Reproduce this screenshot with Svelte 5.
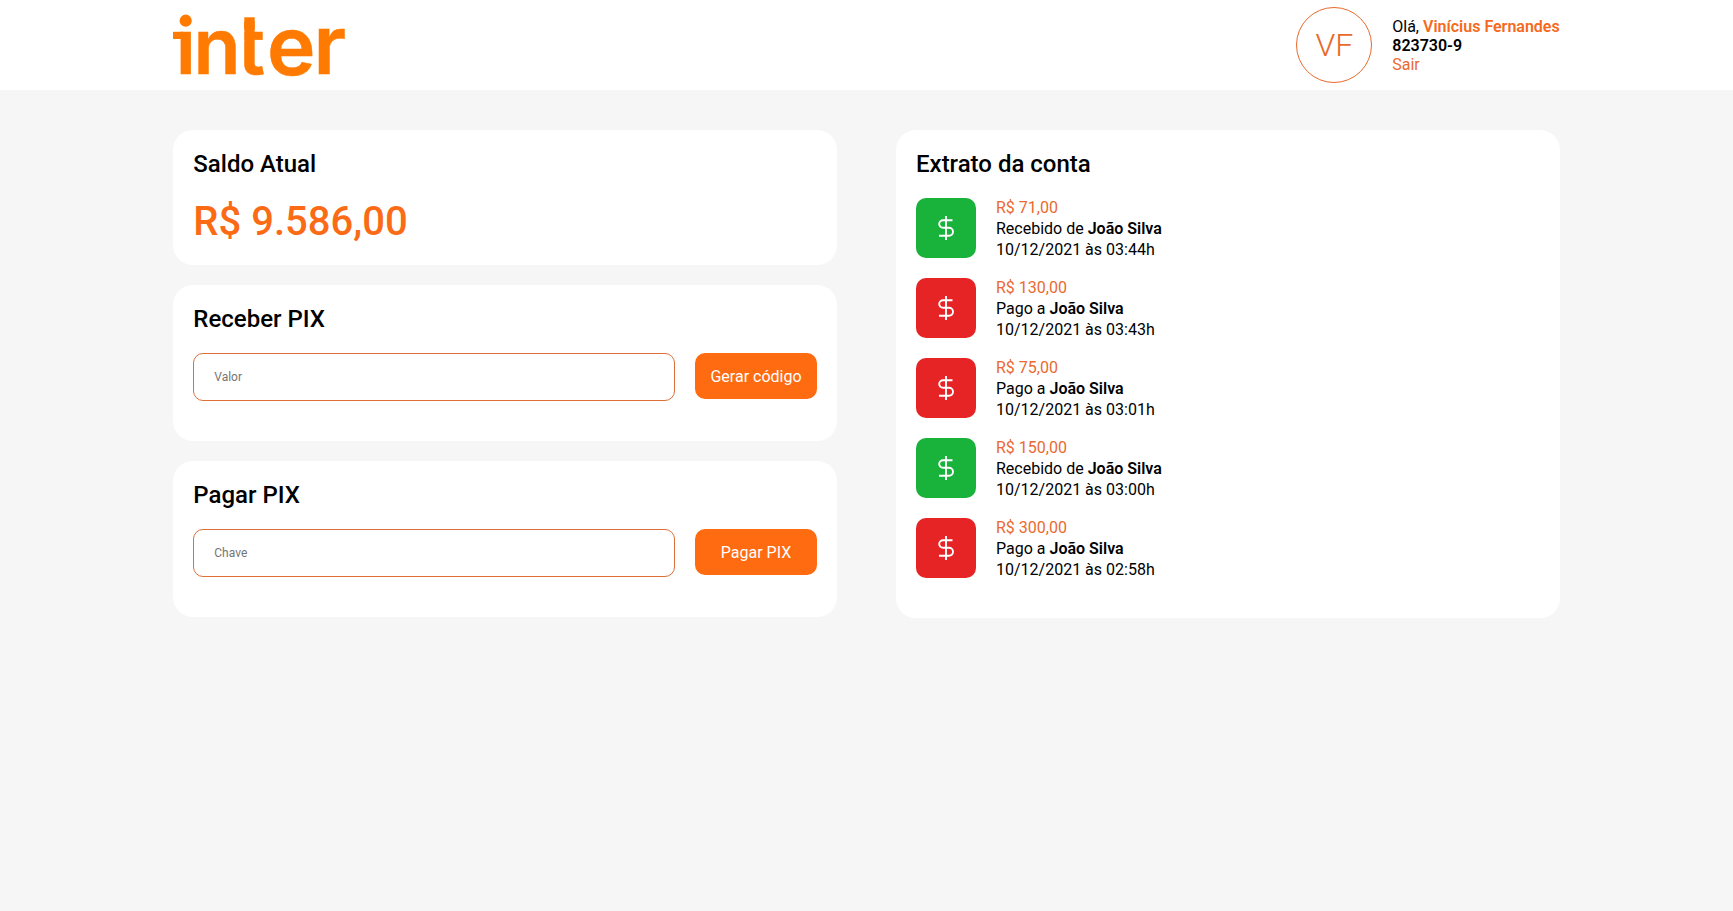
<script>
  const entries = [
    { value: 'R$ 71,00', action: 'Recebido de', name: 'João Silva', date: '10/12/2021 às 03:44h', received: true },
    { value: 'R$ 130,00', action: 'Pago a', name: 'João Silva', date: '10/12/2021 às 03:43h', received: false },
    { value: 'R$ 75,00', action: 'Pago a', name: 'João Silva', date: '10/12/2021 às 03:01h', received: false },
    { value: 'R$ 150,00', action: 'Recebido de', name: 'João Silva', date: '10/12/2021 às 03:00h', received: true },
    { value: 'R$ 300,00', action: 'Pago a', name: 'João Silva', date: '10/12/2021 às 02:58h', received: false }
  ];
</script>

<header>
  <div class="wrap bar">
    <svg class="logo" width="180" height="90" viewBox="0 -13 180 90">
      <text y="61"><tspan x="2.7 20.5 64.8">ınt</tspan><tspan x="94" y="62" font-size="82">e</tspan><tspan x="140.5" y="61" font-size="82">r</tspan></text>
      <circle cx="12.7" cy="7.7" r="6.1" />
      <rect x="0" y="18.8" width="10" height="7.2" />
      <rect x="71.3" y="4.3" width="10.4" height="12" />
      <rect class="blank" x="64.6" y="16.5" width="6.6" height="12" />
    </svg>
    <div class="user">
      <div class="avatar">VF</div>
      <div class="info">
        <p>Olá, <strong class="primary">Vinícius Fernandes</strong></p>
        <p><strong>823730-9</strong></p>
        <a href="#sair">Sair</a>
      </div>
    </div>
  </div>
</header>

<main class="wrap">
  <div class="column">
    <section class="card">
      <h2>Saldo Atual</h2>
      <p class="balance">R$ 9.586,00</p>
    </section>
    <section class="card">
      <h2>Receber PIX</h2>
      <div class="form">
        <input placeholder="Valor" />
        <button>Gerar código</button>
      </div>
    </section>
    <section class="card">
      <h2>Pagar PIX</h2>
      <div class="form">
        <input placeholder="Chave" />
        <button>Pagar PIX</button>
      </div>
    </section>
  </div>
  <div class="column">
    <section class="card">
      <h2>Extrato da conta</h2>
      {#each entries as entry}
        <div class="entry">
          <div class="icon" class:received={entry.received}>
            <svg width="26" height="26" viewBox="0 0 26 26" fill="none" stroke="currentColor" stroke-width="1.9">
              <line x1="13" y1="1" x2="13" y2="25" />
              <path d="M19.5 5.2H10a3.8 3.8 0 0 0 0 7.6h6a4 4 0 0 1 0 8H6" />
            </svg>
          </div>
          <div class="details">
            <p class="value">{entry.value}</p>
            <p>{entry.action} <strong>{entry.name}</strong></p>
            <p>{entry.date}</p>
          </div>
        </div>
      {/each}
    </section>
  </div>
</main>

<style>
  :global(body) { margin: 0; background: #f6f6f6; }
  * { box-sizing: border-box; }
  header, main, input, button { font-family: Roboto, sans-serif; font-size: 16px; }
  header, main { color: #000; font-weight: 400; }
  p, h2 { margin: 0; }
  strong { font-weight: 600; }
  header { background: #fff; }
  .wrap { width: 80%; margin: 0 auto; }
  .bar { height: 90px; display: flex; align-items: center; justify-content: space-between; }
  .logo { display: block; fill: #ff7a00; overflow: visible; }
  .logo text { font-family: Inter, sans-serif; font-size: 77px; font-weight: 600; stroke: #ff7a00; stroke-width: 0.5; }
  .blank { fill: #fff; }
  .user { display: flex; align-items: center; gap: 20px; }
  .avatar {
    width: 76px; height: 76px; border: 1px solid #e8692c; border-radius: 50%;
    display: flex; align-items: center; justify-content: center;
    color: #e8692c; font-size: 32px; font-weight: 300;
  }
  .info { line-height: 19px; }
  .primary { color: #f56a1d; }
  a { display: block; color: #ea6a30; text-decoration: none; }
  main { display: flex; gap: 59px; padding-top: 40px; }
  .column { flex: 1; display: flex; flex-direction: column; gap: 20px; }
  .card { background: #fff; border-radius: 20px; padding: 20px; }
  h2 { font-size: 24px; line-height: 28px; font-weight: 500; margin-bottom: 20px; }
  .balance { font-size: 40px; line-height: 47px; font-weight: 500; color: #fb6b16; }
  .form { display: flex; gap: 20px; align-items: flex-start; margin-bottom: 20px; }
  input {
    flex: 1; min-width: 0; height: 48px; padding: 0 20px; border: 1px solid #dc7038;
    border-radius: 10px; font-size: 12px; font-weight: 400; background: #fff;
  }
  input::placeholder { color: #757575; }
  button { width: 122px; height: 46px; padding: 0; border: 0; border-radius: 10px; background: #ff6b10; color: #fff; }
  .entry { height: 60px; display: flex; align-items: center; gap: 20px; margin-bottom: 20px; }
  .icon {
    width: 60px; height: 60px; border-radius: 10px; background: #e62325; color: #fff;
    display: flex; align-items: center; justify-content: center;
  }
  .icon.received { background: #19b23a; }
  .details { line-height: 21px; }
  .value { color: #ea6a30; }
</style>
